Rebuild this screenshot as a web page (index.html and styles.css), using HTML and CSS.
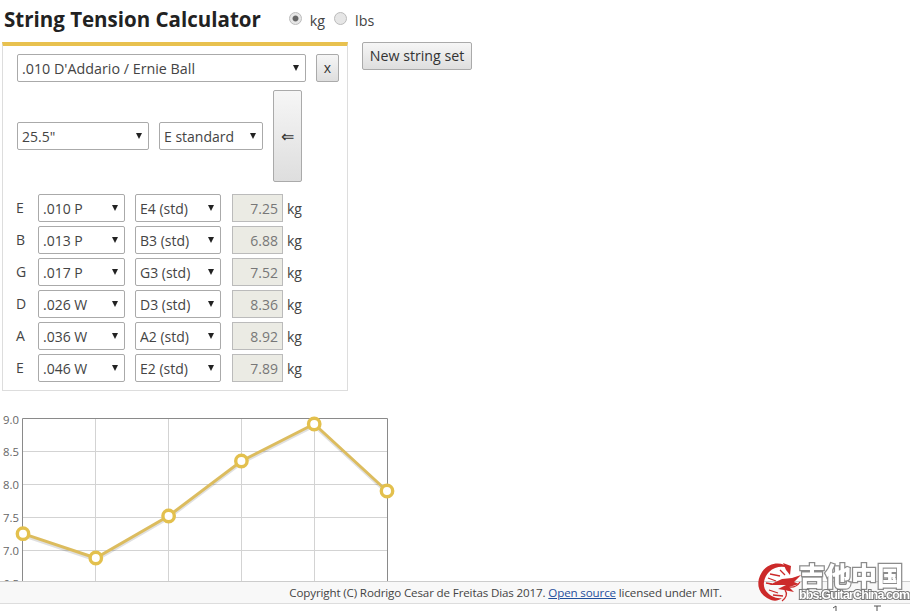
FILE: index.html
```html
<!DOCTYPE html>
<html lang="en">
<head>
<meta charset="utf-8">
<title>String Tension Calculator</title>
<link rel="stylesheet" href="styles.css">
</head>
<body>
<header class="head">
  <h1>String Tension Calculator</h1>
  <label class="unit"><input type="radio" name="u" class="radio" checked> kg</label>
  <label class="unit"><input type="radio" name="u" class="radio"> lbs</label>
</header>
<div class="top">
  <section class="panel">
    <div class="setrow">
      <span class="sel w-set"><select><option>.010 D'Addario / Ernie Ball</option></select></span>
      <button class="btn btn-x">x</button>
    </div>
    <div class="scalerow">
      <span class="sel w-scale"><select><option>25.5"</option></select></span>
      <span class="sel w-tune"><select><option>E standard</option></select></span>
      <button class="btn btn-apply">⇐</button>
    </div>
    <div class="strings">
      <div class="string"><span class="name">E</span><span class="sel w-g"><select><option>.010 P</option></select></span><span class="sel w-n"><select><option>E4 (std)</option></select></span><input class="out" value="7.25" readonly><span class="kg">kg</span></div>
      <div class="string"><span class="name">B</span><span class="sel w-g"><select><option>.013 P</option></select></span><span class="sel w-n"><select><option>B3 (std)</option></select></span><input class="out" value="6.88" readonly><span class="kg">kg</span></div>
      <div class="string"><span class="name">G</span><span class="sel w-g"><select><option>.017 P</option></select></span><span class="sel w-n"><select><option>G3 (std)</option></select></span><input class="out" value="7.52" readonly><span class="kg">kg</span></div>
      <div class="string"><span class="name">D</span><span class="sel w-g"><select><option>.026 W</option></select></span><span class="sel w-n"><select><option>D3 (std)</option></select></span><input class="out" value="8.36" readonly><span class="kg">kg</span></div>
      <div class="string"><span class="name">A</span><span class="sel w-g"><select><option>.036 W</option></select></span><span class="sel w-n"><select><option>A2 (std)</option></select></span><input class="out" value="8.92" readonly><span class="kg">kg</span></div>
      <div class="string"><span class="name">E</span><span class="sel w-g"><select><option>.046 W</option></select></span><span class="sel w-n"><select><option>E2 (std)</option></select></span><input class="out" value="7.89" readonly><span class="kg">kg</span></div>
    </div>
  </section>
  <button class="btn btn-new">New string set</button>
</div>
<svg class="chart" width="400" height="190" viewBox="0 410 400 190">
  <g class="grid">
    <path d="M23 451.5H387M23 484.5H387M23 517.5H387M23 550.5H387M23 583.5H387"/>
    <path d="M95.5 419V590M168.5 419V590M241.5 419V590M314.5 419V590"/>
  </g>
  <path class="frame" d="M22.5 590V418.5H387.5V590"/>
  <g class="ticks">
    <text x="3" y="424">9.0</text>
    <text x="3" y="456">8.5</text>
    <text x="3" y="489">8.0</text>
    <text x="3" y="522">7.5</text>
    <text x="3" y="555">7.0</text>
    <text x="3" y="588">6.5</text>
  </g>
  <polyline class="shadow" points="23,535.5 95.8,560 168.6,518 241.4,463 314.2,426 387,493"/>
  <polyline class="line" points="23,533.7 95.8,558 168.6,516 241.4,461 314.2,424 387,491"/>
  <g class="dots">
    <circle cx="23" cy="533.7" r="5.7"/>
    <circle cx="95.8" cy="558" r="5.7"/>
    <circle cx="168.6" cy="516" r="5.7"/>
    <circle cx="241.4" cy="461" r="5.7"/>
    <circle cx="314.2" cy="424" r="5.7"/>
    <circle cx="387" cy="491" r="5.7"/>
  </g>
</svg>
<footer class="foot">Copyright (C) Rodrigo Cesar de Freitas Dias 2017. <a href="#">Open source</a> licensed under MIT.</footer>
<div class="mark">
  <svg class="dragon" width="46" height="46" viewBox="0 0 46 46">
    <path d="M33 7C27 1 14 0 6 11C0 20 1 31 11 37C16 40 21 41 26 37C20 38 14 35 10 30C6 24 8 16 13 11C19 5 27 5 33 7Z"/>
    <path d="M27 2L35 5L34 14L30 9Z"/>
    <path d="M13 24L26 18L36 17L45 14L38 21L43 23L33 26L38 31L28 29L22 28L30 24Z"/>
    <g class="whisk">
      <path d="M14 13L24 15M12 17L20 20M10 22L16 23M24 9L29 14M13 29L22 32M17 34L27 35"/>
      <path d="M29 29C32 33 30 37 26 40M33 26C39 27 42 24 44 21"/>
    </g>
  </svg>
  <div class="mark-text">
    <div class="cn">吉他中国</div>
    <div class="url">bbs.GuitarChina.com</div>
  </div>
</div>
<svg class="crumbs" width="60" height="6" viewBox="0 0 60 6"><path d="M3 3L6 1V6M44 1H51M47 1V6"/></svg>
</body>
</html>
```
FILE: styles.css
```css
* { box-sizing: border-box; }
html, body { height: 100%; }
body {
  margin: 0;
  padding: 0 0 0 2px;
  overflow: hidden;
  background: #fff;
  color: #333;
  font: 14px/20px "Open Sans", "Noto Sans", sans-serif;
}
.head {
  display: flex;
  align-items: center;
  height: 38px;
  padding-left: 2px;
}
h1 {
  margin: 0 28px 0 0;
  font-size: 20.5px;
  line-height: 38px;
  font-weight: 700;
  color: #222;
  white-space: nowrap;
}
.unit {
  display: flex;
  align-items: center;
  margin-right: 9px;
  gap: 8px;
  color: #444;
  font-size: 14.3px;
  padding-top: 3px;
}
.radio {
  appearance: none;
  width: 13px;
  height: 13px;
  margin: -5px 0 0 0;
  border: 1px solid #bbb;
  border-radius: 50%;
  background: #e6e6e6;
}
.radio:checked {
  background: radial-gradient(circle, #666 0 2.5px, #e6e6e6 3.4px);
}
.top {
  display: flex;
  align-items: flex-start;
  gap: 14px;
  margin-top: 4px;
}
.panel {
  width: 346px;
  height: 349px;
  border: 1px solid #ddd;
  border-top: 4px solid #e8c14f;
  padding: 8px 14px;
}
.setrow { display: flex; gap: 10px; }
.scalerow {
  display: flex;
  align-items: center;
  gap: 10px;
  margin-top: 8px;
}
.sel {
  position: relative;
  display: block;
  height: 28px;
  flex: none;
}
.sel::after {
  content: "";
  position: absolute;
  right: 7px;
  top: 11px;
  border: 3px solid transparent;
  border-top: 6px solid #222;
  border-bottom: 0;
}
select {
  appearance: none;
  width: 100%;
  height: 100%;
  padding: 1px 16px 0 4px;
  border: 1px solid #aaa;
  border-radius: 2px;
  background: #fff;
  color: #444;
  font: inherit;
}
.w-set { width: 289px; }
.w-set select { font-size: 14.3px; }
.w-scale { width: 132px; }
.w-tune { width: 104px; }
.w-g { width: 87px; }
.w-n { width: 86px; }
.btn {
  flex: none;
  border: 1px solid #aaa;
  border-radius: 2px;
  background: linear-gradient(#f6f6f6, #dedede);
  color: #333;
  font: inherit;
  padding: 0;
}
.btn-x { width: 23px; height: 28px; }
.btn-apply { width: 29px; height: 92px; font-size: 16px; }
.btn-new { width: 110px; height: 28px; font-size: 14.2px; }
.strings {
  display: flex;
  flex-direction: column;
  gap: 4px;
  margin-top: 12px;
}
.string {
  display: flex;
  align-items: center;
  height: 28px;
}
.name { width: 22px; margin-left: -1px; color: #444; }
.w-n { margin-left: 10px; }
.out {
  width: 51px;
  height: 28px;
  margin-left: 11px;
  padding: 1px 4px 0;
  border: 1px solid #bbb;
  background: #ebebe4;
  color: #777;
  font: inherit;
  text-align: right;
}
.kg { margin-left: 4px; color: #444; padding-top: 1px; }
.chart {
  display: block;
  margin: 19px 0 0 -2px;
}
.grid path { fill: none; stroke: #d3d3d3; stroke-width: 1; }
.frame { fill: none; stroke: #8a8a8a; stroke-width: 1; }
.ticks text { font-size: 11.3px; fill: #666; font-family: "Open Sans", sans-serif; }
.shadow { fill: none; stroke: rgba(0, 0, 0, .12); stroke-width: 3; }
.line { fill: none; stroke: #dcbc5e; stroke-width: 3; }
.dots circle { fill: #fff; stroke: #e3c04d; stroke-width: 3.4; }
.foot {
  position: fixed;
  left: 0;
  right: 0;
  top: 581px;
  height: 23px;
  padding-right: 188px;
  border-top: 1px solid #ccc;
  border-bottom: 1px solid #ddd;
  background: #f8f8f8;
  color: #444;
  font-size: 11.6px;
  letter-spacing: -.14px;
  line-height: 21px;
  text-align: right;
  white-space: nowrap;
}
.foot a { color: #1f4f9c; }
.mark {
  position: fixed;
  left: 756px;
  top: 561px;
  display: flex;
}
.dragon path { fill: #cc2a2a; }
.dragon .whisk path { fill: none; stroke: #cc2a2a; stroke-width: 1.3; }
.mark-text { margin-left: -3px; width: 108px; }
.cn {
  font: 900 26px/28px "Noto Sans CJK SC", sans-serif;
  color: #fff;
  -webkit-text-stroke: 2.5px #8c8c8c;
  paint-order: stroke fill;
  white-space: nowrap;
}
.url {
  font: 700 12.5px/13px "Liberation Sans", sans-serif;
  letter-spacing: -.85px;
  color: #fff;
  -webkit-text-stroke: 2px #777;
  paint-order: stroke fill;
  white-space: nowrap;
}
.crumbs {
  position: fixed;
  left: 830px;
  top: 605px;
}
.crumbs path { fill: none; stroke: #555; stroke-width: 1; }
```
